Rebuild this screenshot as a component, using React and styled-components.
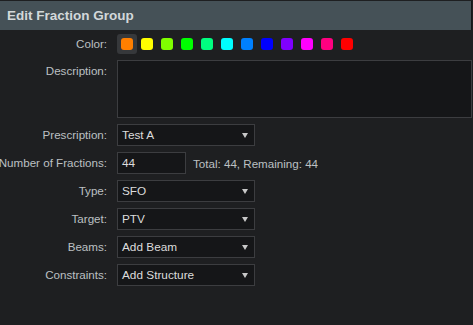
import React from 'react'
import styled, { createGlobalStyle } from 'styled-components'

const GlobalStyle = createGlobalStyle`
  html, body {
    margin: 0;
    padding: 0;
    background: #1e1f21;
  }
  body {
    font-family: 'Liberation Sans', Arial, sans-serif;
  }
`

const Panel = styled.div`
  width: 473px;
  height: 325px;
  background: #1e1f21;
  box-sizing: border-box;
  padding-top: 1px;
  overflow: hidden;
`

const Header = styled.div`
  width: 472px;
  height: 29px;
  box-sizing: border-box;
  background: #455157;
  border-right: 1px solid #15171a;
  color: #d3d8da;
  font-size: 13.5px;
  font-weight: bold;
  display: flex;
  align-items: center;
  padding-left: 7px;
`

const Form = styled.div`
  display: grid;
  grid-template-columns: 107px auto;
  column-gap: 10px;
  row-gap: 6px;
  padding-top: 4px;
`

const Label = styled.div`
  color: #bcc0c3;
  font-size: 11.6px;
  display: flex;
  justify-content: flex-end;
  white-space: nowrap;
  min-width: 0;
  height: ${p => p.$height || 22}px;
  line-height: ${p => p.$top ? '14px' : `${p.$height || 22}px`};
  padding-top: ${p => p.$top ? '4px' : '0'};
`

const Swatches = styled.div`
  display: flex;
  align-items: center;
  height: 20px;
`

const SwatchCell = styled.div`
  width: 20px;
  height: 20px;
  display: flex;
  align-items: center;
  justify-content: center;
  border-radius: 3px;
  background: ${p => p.$selected ? '#36383b' : 'transparent'};
`

const Swatch = styled.div`
  width: 12px;
  height: 12px;
  border-radius: 3px;
  background: ${p => p.$color};
`

const TextArea = styled.div`
  width: 355px;
  height: 58px;
  box-sizing: border-box;
  background: #151618;
  border: 1px solid #3c3d40;
`

const Field = styled.div`
  width: ${p => p.$width}px;
  height: 22px;
  box-sizing: border-box;
  background: #151618;
  border: 1px solid #3c3d40;
  display: flex;
  align-items: center;
  padding: 0 5px 0 4px;
  color: #dcdcdc;
  font-size: 11.8px;
`

const Value = styled.span`
  flex: 1;
`

const Arrow = styled.span`
  width: 0;
  height: 0;
  border-left: 3px solid transparent;
  border-right: 3px solid transparent;
  border-top: 5px solid #c8c8c8;
  margin-right: 1px;
`

const Inline = styled.div`
  display: flex;
  align-items: center;
  gap: 7px;
`

const Note = styled.span`
  color: #bcc0c3;
  font-size: 11.6px;
`

const colors = [
  '#ff7f00', '#ffff00', '#80ff00', '#00ff00', '#00ff80', '#00ffff',
  '#0080ff', '#0000ff', '#8000ff', '#ff00ff', '#ff0080', '#ff0000'
]

const Select = ({ value }) => (
  <Field $width={138}>
    <Value>{value}</Value>
    <Arrow />
  </Field>
)

const selects = [
  ['Type:', 'SFO'],
  ['Target:', 'PTV'],
  ['Beams:', 'Add Beam'],
  ['Constraints:', 'Add Structure']
]

export default function App() {
  return (
    <Panel>
      <GlobalStyle />
      <Header>Edit Fraction Group</Header>
      <Form>
        <Label $height={20}>Color:</Label>
        <Swatches>
          {colors.map((c, i) => (
            <SwatchCell key={c} $selected={i === 0}>
              <Swatch $color={c} />
            </SwatchCell>
          ))}
        </Swatches>
        <Label $top $height={54}>Description:</Label>
        <TextArea />
        <Label>Prescription:</Label>
        <Select value="Test A" />
        <Label>Number of Fractions:</Label>
        <Inline>
          <Field $width={69}>44</Field>
          <Note>Total: 44, Remaining: 44</Note>
        </Inline>
        {selects.map(([l, v]) => (
          <React.Fragment key={l}>
            <Label>{l}</Label>
            <Select value={v} />
          </React.Fragment>
        ))}
      </Form>
    </Panel>
  )
}
